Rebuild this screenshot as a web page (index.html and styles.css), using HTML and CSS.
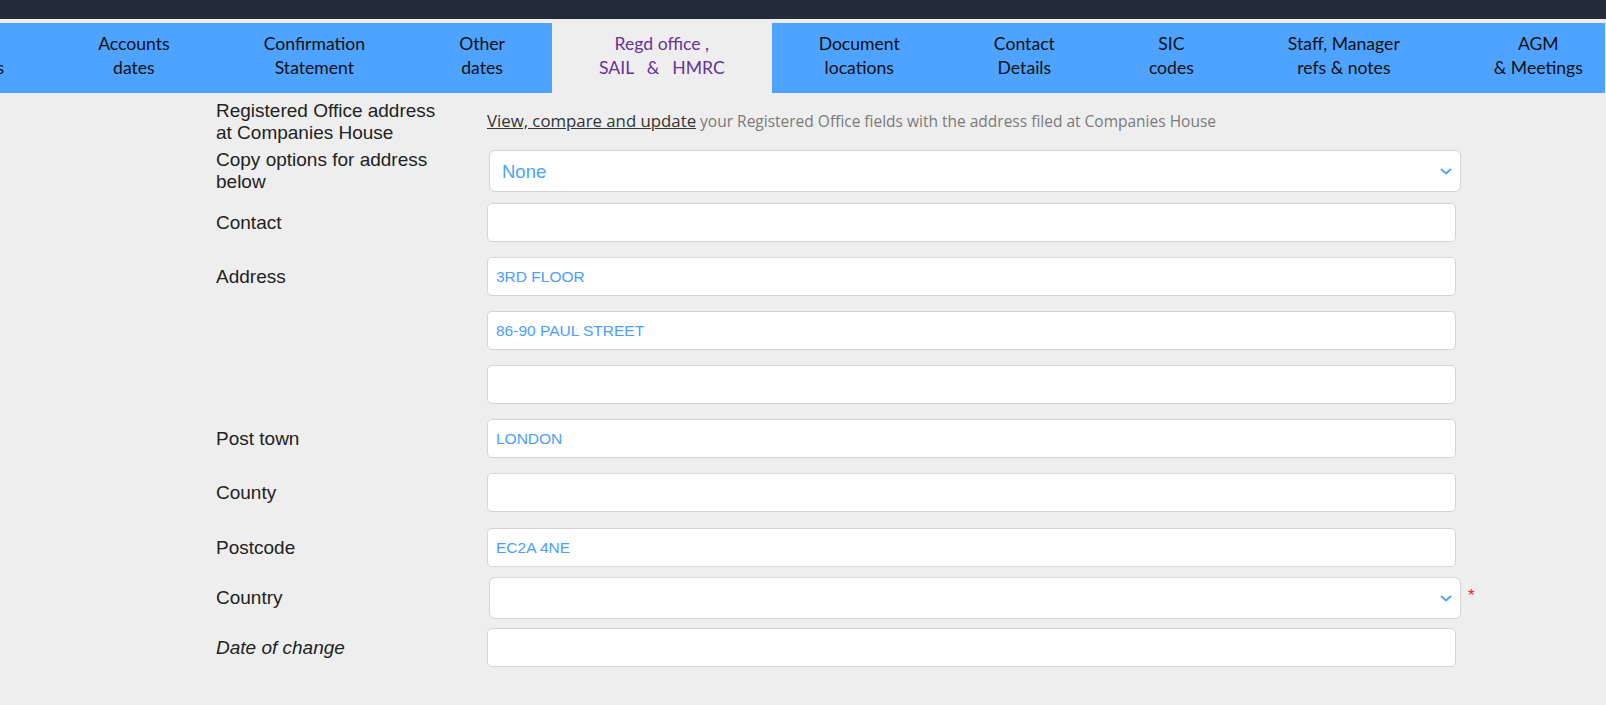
FILE: index.html
```html
<!DOCTYPE html>
<html lang="en">
<head>
<meta charset="utf-8">
<title>Regd office, SAIL &amp; HMRC</title>
<link rel="stylesheet" href="styles.css">
</head>
<body>
<div class="topbar"></div>
<div class="navwrap">
  <nav class="nav">
    <a class="tab first" href="#">Main<br>details</a>
    <a class="tab" href="#">Accounts<br>dates</a>
    <a class="tab" href="#">Confirmation<br>Statement</a>
    <a class="tab" href="#">Other<br>dates</a>
    <a class="tab active" href="#">Regd office ,<br><span class="wide">SAIL &nbsp;&amp;&nbsp; HMRC</span></a>
    <a class="tab" href="#">Document<br>locations</a>
    <a class="tab" href="#">Contact<br>Details</a>
    <a class="tab" href="#">SIC<br>codes</a>
    <a class="tab" href="#">Staff, Manager<br>refs &amp; notes</a>
    <a class="tab" href="#">AGM<br>&amp; Meetings</a>
  </nav>
</div>

<form class="form">
  <div class="row row-info">
    <div class="label">Registered Office address<br>at Companies House</div>
    <div class="info"><a class="link" href="#">View, compare and update</a> your Registered Office fields with the address filed at Companies House</div>
  </div>
  <div class="row row-copy">
    <div class="label">Copy options for address<br>below</div>
    <div class="select-wrap">
      <select class="select"><option>None</option></select>
      <svg class="chev" viewBox="0 0 12 7" width="12" height="7"><path d="M1 1 L6 5.5 L11 1" fill="none" stroke="#4da3ff" stroke-width="2"/></svg>
    </div>
  </div>
  <div class="row row-first">
    <div class="label">Contact</div>
    <input class="input" type="text" value="">
  </div>
  <div class="row row-next">
    <div class="label">Address</div>
    <input class="input" type="text" value="3RD FLOOR">
  </div>
  <div class="row row-next">
    <div class="label"></div>
    <input class="input" type="text" value="86-90 PAUL STREET">
  </div>
  <div class="row row-next">
    <div class="label"></div>
    <input class="input" type="text" value="">
  </div>
  <div class="row row-next">
    <div class="label">Post town</div>
    <input class="input" type="text" value="LONDON">
  </div>
  <div class="row row-next">
    <div class="label">County</div>
    <input class="input" type="text" value="">
  </div>
  <div class="row row-post">
    <div class="label">Postcode</div>
    <input class="input" type="text" value="EC2A 4NE">
  </div>
  <div class="row row-country">
    <div class="label">Country</div>
    <div class="select-wrap">
      <select class="select"><option></option></select>
      <svg class="chev" viewBox="0 0 12 7" width="12" height="7"><path d="M1 1 L6 5.5 L11 1" fill="none" stroke="#4da3ff" stroke-width="2"/></svg>
    </div>
    <span class="req">*</span>
  </div>
  <div class="row row-date">
    <div class="label italic">Date of change</div>
    <input class="input" type="text" value="">
  </div>
</form>
</body>
</html>
```

FILE: styles.css
```css
html, body {
  margin: 0;
  padding: 0;
}

body {
  background: #eeeeee;
  font-family: "Liberation Sans", Arial, sans-serif;
  width: 1606px;
  height: 705px;
  overflow: hidden;
}

.topbar {
  height: 19px;
  background: #232b38;
}

.navwrap {
  margin-top: 4px;
  width: 1605px;
  overflow: hidden;
}

.nav {
  display: flex;
  margin-left: -93px;
  height: 70px;
  background: #4da3ff;
  font-family: Lato, "Noto Sans", sans-serif;
  font-size: 17.6px;
  line-height: 24px;
}

.tab {
  flex: none;
  box-sizing: border-box;
  height: 70px;
  padding: 9px 47px 13px;
  text-align: center;
  white-space: nowrap;
  color: #111111;
  text-decoration: none;
  background: #4da3ff;
}

.tab.active {
  background: #eeeeee;
  color: #663399;
}

.wide {
  word-spacing: 2px;
}

.form {
  margin: 0;
  padding: 7px 0 0 216px;
}

.row {
  display: grid;
  grid-template-columns: 271px 969px auto;
  align-items: center;
}

.label {
  font-size: 19px;
  line-height: 22px;
  color: #222222;
}

.label.italic {
  font-style: italic;
}

.row-info {
  height: 44px;
}

.row-copy {
  margin-top: 5px;
  height: 44px;
}

.row-first {
  margin-top: 10px;
}

.row-next {
  margin-top: 15px;
}

.row-post {
  margin-top: 16px;
}

.row-country {
  margin-top: 10px;
}

.row-date {
  margin-top: 9px;
}

.info {
  padding-bottom: 4px;
  font-family: "Open Sans", "Noto Sans", sans-serif;
  font-size: 15.5px;
  color: #7a7a7a;
  white-space: nowrap;
}

.link {
  font-size: 16.8px;
  color: #333333;
  text-decoration: underline;
}

.input {
  box-sizing: border-box;
  display: block;
  width: 969px;
  height: 39px;
  margin: 0;
  border: 1px solid #d4d4d4;
  border-radius: 5px;
  background: #ffffff;
  padding: 0 8px;
  font-family: "Liberation Sans", Arial, sans-serif;
  font-size: 15.5px;
  color: #4a9eff;
  outline: none;
}

.select-wrap {
  position: relative;
  margin-left: 2px;
  width: 972px;
  height: 42px;
}

.select {
  box-sizing: border-box;
  display: block;
  width: 100%;
  height: 100%;
  margin: 0;
  -webkit-appearance: none;
  appearance: none;
  border: 1px solid #d4d4d4;
  border-radius: 6px;
  background: #ffffff;
  padding: 0 36px 0 12px;
  font-family: "Liberation Sans", Arial, sans-serif;
  font-size: 18.5px;
  color: #4da3ff;
  outline: none;
}

.chev {
  position: absolute;
  right: 9px;
  top: 18px;
  pointer-events: none;
}

.req {
  align-self: start;
  margin-top: 10px;
  padding-left: 12px;
  font-size: 17px;
  line-height: 17px;
  color: #ff1a1a;
}
```
